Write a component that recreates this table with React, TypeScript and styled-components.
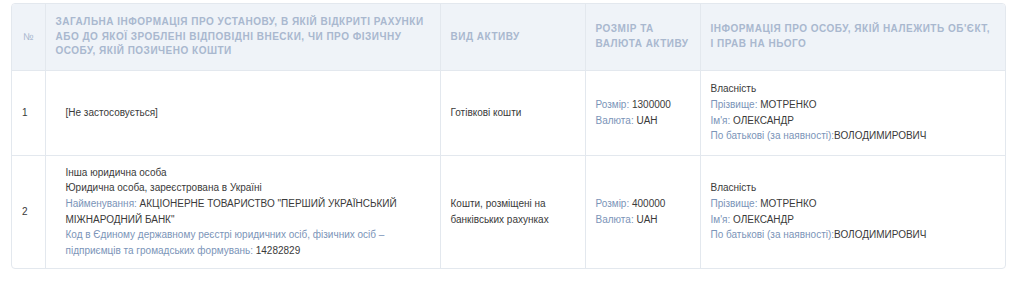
import React from 'react'
import styled, { createGlobalStyle } from 'styled-components'

const GlobalStyle = createGlobalStyle`
  body {
    margin: 0;
    background: #fff;
    font-family: "Liberation Sans", Arial, sans-serif;
  }
`

type Field = { label?: string; value: string }

type Row = {
  num: string
  info: Field[]
  indent: boolean
  kind: string
  size: Field[]
  owner: Field[]
}

const rows: Row[] = [
  {
    num: '1',
    info: [{ value: '[Не застосовується]' }],
    indent: true,
    kind: 'Готівкові кошти',
    size: [
      { label: 'Розмір: ', value: '1300000' },
      { label: 'Валюта: ', value: 'UAH' },
    ],
    owner: [
      { value: 'Власність' },
      { label: 'Прізвище: ', value: 'МОТРЕНКО' },
      { label: "Ім'я: ", value: 'ОЛЕКСАНДР' },
      { label: 'По батькові (за наявності):', value: 'ВОЛОДИМИРОВИЧ' },
    ],
  },
  {
    num: '2',
    info: [
      { value: 'Інша юридична особа' },
      { value: 'Юридична особа, зареєстрована в Україні' },
      { label: 'Найменування: ', value: 'АКЦІОНЕРНЕ ТОВАРИСТВО "ПЕРШИЙ УКРАЇНСЬКИЙ МІЖНАРОДНИЙ БАНК"' },
      {
        label: 'Код в Єдиному державному реєстрі юридичних осіб, фізичних осіб – підприємців та громадських формувань: ',
        value: '14282829',
      },
    ],
    indent: true,
    kind: 'Кошти, розміщені на банківських рахунках',
    size: [
      { label: 'Розмір: ', value: '400000' },
      { label: 'Валюта: ', value: 'UAH' },
    ],
    owner: [
      { value: 'Власність' },
      { label: 'Прізвище: ', value: 'МОТРЕНКО' },
      { label: "Ім'я: ", value: 'ОЛЕКСАНДР' },
      { label: 'По батькові (за наявності):', value: 'ВОЛОДИМИРОВИЧ' },
    ],
  },
]

function Lines({ items }: { items: Field[] }) {
  return (
    <>
      {items.map((f, i) => (
        <Line key={i}>
          {f.label && <Label>{f.label}</Label>}
          {f.value}
        </Line>
      ))}
    </>
  )
}

function App() {
  return (
    <Page>
      <GlobalStyle />
      <Frame>
        <Table>
          <colgroup>
            <col style={{ width: 33 }} />
            <col style={{ width: 395 }} />
            <col style={{ width: 145 }} />
            <col style={{ width: 115 }} />
            <col />
          </colgroup>
          <thead>
            <tr>
              <Th>№</Th>
              <Th>Загальна інформація про установу, в якій відкриті рахунки або до якої зроблені відповідні внески, чи про фізичну особу, якій позичено кошти</Th>
              <Th>Вид активу</Th>
              <Th>Розмір та валюта активу</Th>
              <Th>Інформація про особу, якій належить об'єкт, і прав на нього</Th>
            </tr>
          </thead>
          <tbody>
            {rows.map((r) => (
              <tr key={r.num}>
                <Td>{r.num}</Td>
                <Td>
                  <Block $indent={r.indent}>
                    <Lines items={r.info} />
                  </Block>
                </Td>
                <Td>{r.kind}</Td>
                <Td>
                  <Lines items={r.size} />
                </Td>
                <Td>
                  <Lines items={r.owner} />
                </Td>
              </tr>
            ))}
          </tbody>
        </Table>
      </Frame>
    </Page>
  )
}

const Page = styled.div`
  padding: 3px 18px 12px 11px;
`

const Frame = styled.div`
  width: 995px;
  box-sizing: border-box;
  border: 1px solid #e3e8ee;
  border-radius: 4px;
  overflow: hidden;
`

const Table = styled.table`
  width: 100%;
  table-layout: fixed;
  border-collapse: collapse;
`

const Th = styled.th`
  background: #eff3f8;
  color: #a9b8cf;
  font-size: 10px;
  font-weight: 700;
  line-height: 14.5px;
  letter-spacing: 0.5px;
  text-transform: uppercase;
  text-align: left;
  vertical-align: middle;
  padding: 11px 10px 11px 10px;
  height: 65px;
  box-sizing: border-box;
  border-left: 1px solid #e3e8ee;
  border-bottom: 1px solid #e3e8ee;
  &:first-child {
    border-left: none;
    font-weight: 400;
    padding-left: 11px;
  }
`

const Td = styled.td`
  color: #3a3a3a;
  font-size: 10px;
  line-height: 15.7px;
  vertical-align: middle;
  padding: 9px 10px;
  border-left: 1px solid #e3e8ee;
  border-top: 1px solid #e3e8ee;
  &:first-child {
    border-left: none;
  }
  tr:first-child > & {
    border-top: none;
    height: 85px;
    box-sizing: border-box;
  }
`

const Block = styled.div<{ $indent: boolean }>`
  padding-left: ${(p) => (p.$indent ? '10px' : '0')};
`

const Line = styled.div``

const Label = styled.span`
  color: #7b94b8;
`

export default App
